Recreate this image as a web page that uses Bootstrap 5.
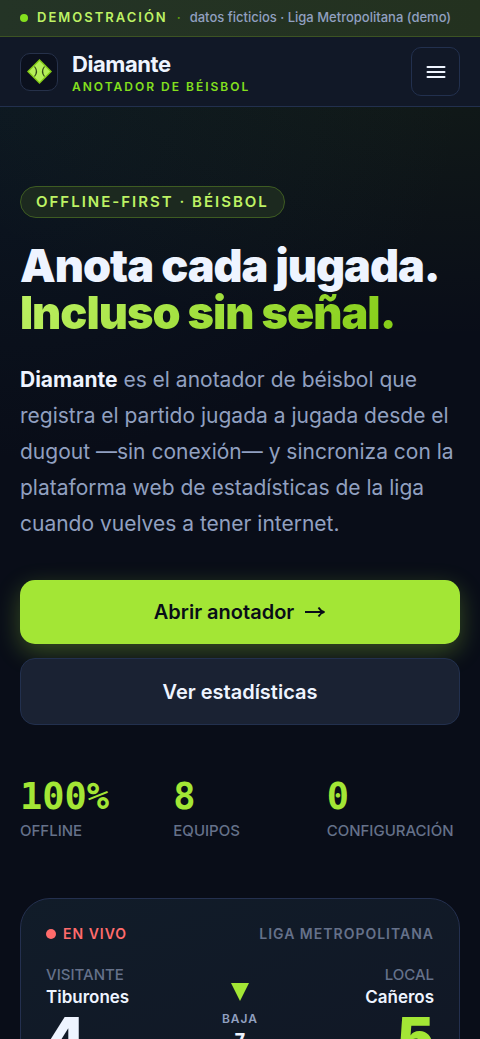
<!DOCTYPE html>
<html lang="es" data-bs-theme="dark">
<head>
<meta charset="utf-8">
<meta name="viewport" content="width=device-width, initial-scale=1">
<title>Diamante · Anotador de béisbol</title>
<link href="https://cdn.jsdelivr.net/npm/bootstrap@5.3.0/dist/css/bootstrap.min.css" rel="stylesheet">
<style>
:root{--lime:#a3e635;--lime-soft:#bef264;--ink:#eef4ff;--muted-blue:#91a0c0;--dim:#65718a;--line:#22304e}
body{font-family:Inter,"Liberation Sans",sans-serif;color:var(--ink);background:#090d18;height:100vh;overflow:hidden}
.page{background:radial-gradient(ellipse 560px 280px at 90% 60px,rgba(132,204,22,.07),transparent),radial-gradient(ellipse 460px 360px at 0 100px,rgba(30,80,90,.14),transparent)}
.gutter{padding-left:20px;padding-right:20px}
.demo-bar{height:37px;background:linear-gradient(90deg,#243426,#23311f);border-bottom:1px solid #3c5323;font-size:13px;font-weight:500;white-space:nowrap;gap:9px;color:var(--muted-blue)}
.demo-bar strong{color:var(--lime-soft);font-size:13px;letter-spacing:2px;font-weight:600}
.demo-sep{color:#65a30d}
.dot{width:8px;height:8px;border-radius:50%;background:#84e01e;flex:none}
.dot-live{width:10px;height:10px;background:#ff6b6b}
.site-head{height:70px;background:#111827;border-bottom:1px solid var(--line)}
.brand-link{gap:14px}
.brand-box{width:38px;height:38px;border:1px solid #26314a;border-radius:10px;background:#0b101d}
.brand-text{padding-top:3px}
.brand-name{font-size:22px;line-height:28px;font-weight:700;letter-spacing:-.02em}
.brand-sub{font-size:12px;line-height:18px;font-weight:600;letter-spacing:2px;color:#84e01e}
.menu-btn{width:49px;height:49px;border:1px solid var(--line);border-radius:10px;background:transparent}
.hero{padding-top:79px}
.pill{height:32px;padding:0 15px;border:1px solid #3e5c22;border-radius:16px;background:#1c291f;color:var(--lime-soft);font-size:15px;font-weight:600;letter-spacing:2px}
.hero h1{font-size:45px;line-height:47px;font-weight:900;letter-spacing:-1px;color:var(--ink);margin:24px 0 26px;white-space:nowrap}
.hero h1 span{background:linear-gradient(135deg,#bef264,#84cc16);-webkit-background-clip:text;background-clip:text;color:transparent}
.intro{font-size:21px;line-height:36px;color:var(--muted-blue);margin-bottom:38px}
.intro strong{color:var(--ink);font-weight:700}
.actions{gap:14px}
.action{border-radius:15px;font-size:20px;font-weight:600;line-height:30px}
.action-main{height:64px;background:var(--lime)!important;color:#090d18!important;border:0;box-shadow:0 8px 24px rgba(163,230,53,.3);gap:10px}
.action-alt{height:67px;background:#1a2233;color:var(--ink);border:1px solid var(--line)}
.stats{display:grid;grid-template-columns:repeat(3,1fr);gap:20px;margin-top:52px}
.stats dd{font-family:"DejaVu Sans Mono",monospace;font-weight:700;font-size:37px;line-height:40px;color:var(--lime);margin:0}
.stats dt{font-size:15px;line-height:20px;font-weight:500;color:var(--dim);margin-top:4px;white-space:nowrap}
.score-card{margin-top:57px;border:1px solid #24304f;border-radius:30px;padding:25px;background:linear-gradient(160deg,#111c29,#111725)}
.live{font-size:14px;line-height:20px;font-weight:600;letter-spacing:1px;color:#ff6b6b;gap:7px}
.league{font-size:14px;line-height:20px;font-weight:600;letter-spacing:1px;color:var(--dim)}
.teams{display:grid;grid-template-columns:1fr auto 1fr;margin-top:21px}
.side-label{font-size:15px;line-height:20px;font-weight:500;color:var(--dim)}
.team{font-size:17px;line-height:24px;font-weight:600}
.runs{font-size:56px;line-height:58px;font-weight:900}
.lime-text{color:var(--lime)}
.half{padding-top:18px}
.inning{font-size:12px;line-height:16px;font-weight:600;letter-spacing:1px;color:var(--muted-blue);margin-top:10px}
.inning-no{font-family:"DejaVu Sans Mono",monospace;font-size:20px;line-height:26px;font-weight:700}
</style>
</head>
<body>
<div class="page">
<div class="demo-bar gutter d-flex align-items-center"><span class="dot"></span><strong>DEMOSTRACIÓN</strong><span class="demo-sep">·</span><span>datos ficticios · Liga Metropolitana (demo)</span></div>
<header class="site-head gutter d-flex align-items-center justify-content-between">
<a href="#" class="brand-link d-flex align-items-center text-decoration-none text-reset">
<span class="brand-box d-flex align-items-center justify-content-center"><svg width="27" height="27" viewBox="0 0 27 27" aria-hidden="true"><path d="M13.500 1 26 13.500 13.500 26 1 13.500Z" fill="#84cc16"/><path d="M13.500 3 24 13.500 13.500 24 3 13.500Z" fill="#b5ef58"/><path d="M8.500 8.500Q12.500 13.500 8.500 18.500M18.500 8.500Q14.500 13.500 18.500 18.500" fill="none" stroke="#344b1b" stroke-width="1.200"/></svg></span>
<span class="brand-text d-block"><span class="brand-name d-block">Diamante</span><span class="brand-sub d-block">ANOTADOR DE BÉISBOL</span></span></a>
<button type="button" class="menu-btn d-flex align-items-center justify-content-center p-0" aria-label="Menú"><svg width="20" height="14" viewBox="0 0 20 14" stroke="#eef4ff" stroke-width="2" stroke-linecap="round"><path d="M1.500 2h17M1.500 7h17M1.500 12h17"/></svg></button>
</header>
<main class="hero gutter">
<div class="pill d-inline-flex align-items-center">OFFLINE-FIRST · BÉISBOL</div>
<h1>Anota cada jugada.<br><span>Incluso sin señal.</span></h1>
<p class="intro"><strong>Diamante</strong> es el anotador de béisbol que registra el partido jugada a jugada desde el dugout —sin conexión— y sincroniza con la plataforma web de estadísticas de la liga cuando vuelves a tener internet.</p>
<div class="d-grid actions">
<a href="#" class="btn action action-main d-flex align-items-center justify-content-center">Abrir anotador <svg width="22" height="14" viewBox="0 0 22 14" fill="none" stroke="#090d18" stroke-width="1.800" aria-hidden="true"><path d="M1 7h19M14.500 2.500Q16.500 6 20.500 7Q16.500 8 14.500 11.500"/></svg></a>
<a href="#" class="btn action action-alt d-flex align-items-center justify-content-center">Ver estadísticas</a>
</div>
<dl class="stats mb-0">
<div class="d-flex flex-column-reverse"><dt>OFFLINE</dt><dd>100%</dd></div>
<div class="d-flex flex-column-reverse"><dt>EQUIPOS</dt><dd>8</dd></div>
<div class="d-flex flex-column-reverse"><dt>CONFIGURACIÓN</dt><dd>0</dd></div>
</dl>
<section class="score-card">
<div class="d-flex justify-content-between"><span class="live d-flex align-items-center"><span class="dot dot-live"></span>EN VIVO</span><span class="league">LIGA METROPOLITANA</span></div>
<div class="teams">
<div><div class="side-label">VISITANTE</div><div class="team">Tiburones</div><div class="runs">4</div></div>
<div class="text-center half"><svg class="d-block mx-auto" width="18" height="18" viewBox="0 0 18 18" aria-hidden="true"><path d="M0 0h18L9 18Z" fill="#a3e635"/></svg><div class="inning">BAJA</div><div class="inning-no">7</div></div>
<div class="text-end"><div class="side-label">LOCAL</div><div class="team">Cañeros</div><div class="runs lime-text">5</div></div>
</div>
</section>
</main>
</div>
<script src="https://cdn.jsdelivr.net/npm/bootstrap@5.3.0/dist/js/bootstrap.bundle.min.js"></script>
</body>
</html>
